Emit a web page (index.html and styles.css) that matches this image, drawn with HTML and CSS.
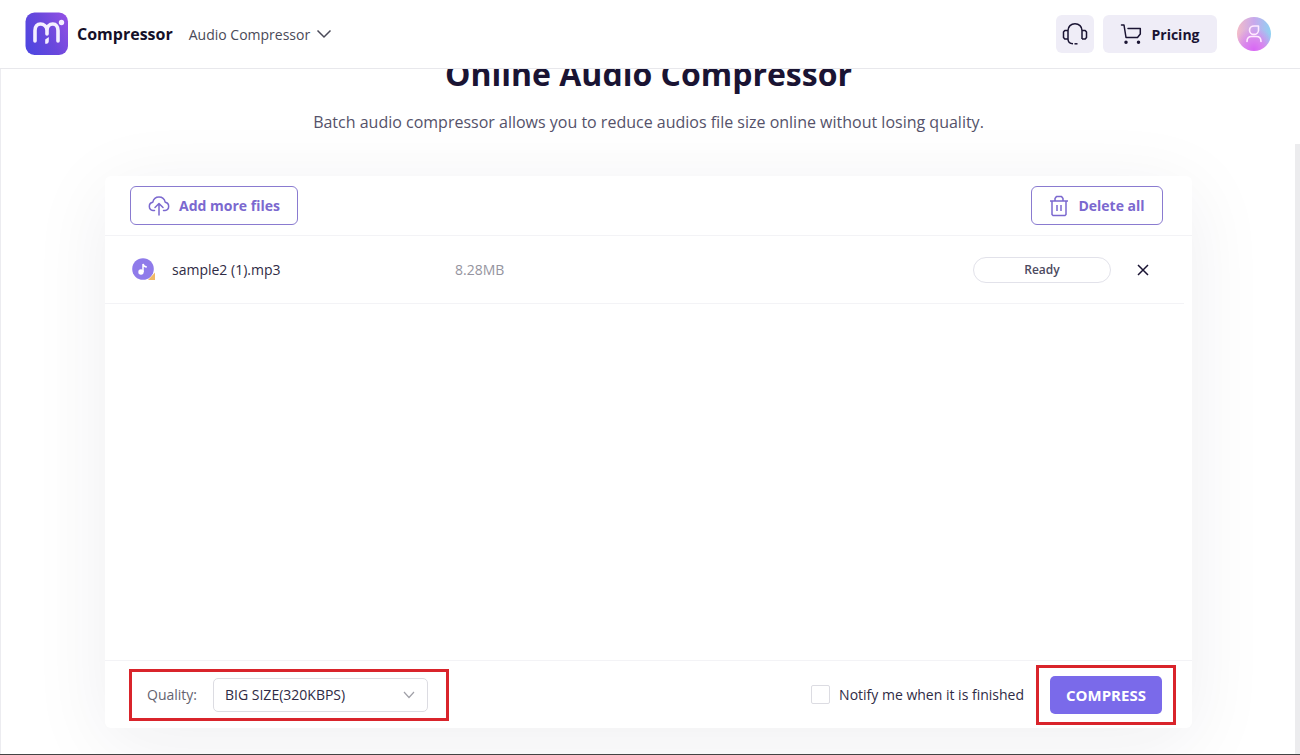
FILE: index.html
```html
<!DOCTYPE html>
<html lang="en">
<head>
  <meta charset="utf-8">
  <title>Online Audio Compressor</title>
  <link rel="stylesheet" href="styles.css">
</head>
<body>
  <header class="header">
    <a class="brand" href="#">
      <svg width="44" height="44" viewBox="0 0 44 44">
        <defs>
          <linearGradient id="logoFill" x1="0" y1="0.7" x2="1" y2="0.2">
            <stop offset="0" stop-color="#5046e0"/>
            <stop offset="0.5" stop-color="#6a48dc"/>
            <stop offset="1" stop-color="#9050e4"/>
          </linearGradient>
        </defs>
        <rect x="0.500" y="0.500" width="42.500" height="42.500" rx="9" fill="url(#logoFill)"/>
        <path d="M10 29V18.500c0-4 2.200-6.500 5.500-6.500s6.500 2.500 6.500 6.500V22M22 18.500c0-4 2.500-6.500 5.800-6.500 3.200 0 5.200 2.500 5.200 6.500V29" fill="none" stroke="#f4efff" stroke-width="3.600" stroke-linecap="round"/>
        <path d="M20.200 27.500l3.600-2.500v4c0 2-1.200 2.800-3.600 2.800z" fill="#f4efff"/>
        <circle cx="36.500" cy="10.500" r="2.700" fill="#f4efff"/>
      </svg>
      <span>Compressor</span>
    </a>
    <button class="menu" type="button">
      Audio Compressor
      <svg width="16" height="10" viewBox="0 0 16 10"><path d="M1.500 1.500L8 8l6.500-6.500" fill="none" stroke="currentColor" stroke-width="1.500"/></svg>
    </button>
    <div class="header-right">
      <button class="soft-btn support" type="button" aria-label="Support">
        <svg width="26" height="26" viewBox="0 0 26 26" fill="none" stroke="currentColor" stroke-width="1.500" stroke-linejoin="round">
          <path d="M6 18V9.500C6 5.500 9 2.800 13 2.800s7 2.700 7 6.700V18M6 18c0 2.600 2 4.600 5 4.800M6 9.500H2.800L1.500 11v5.500L2.800 18H6M20 9.500h3.200l1.300 1.500v5.500L23.200 18H20"/>
          <path d="M12.500 22.800h3"/>
        </svg>
      </button>
      <button class="soft-btn pricing" type="button">
        <svg width="22" height="22" viewBox="0 0 22 22" fill="none" stroke="currentColor" stroke-width="1.500" stroke-linecap="round" stroke-linejoin="round">
          <path d="M1.500 2H4l2 12.500h11.500l2.800-3.500V5.500H8"/>
          <circle cx="6" cy="19.300" r="1" fill="currentColor"/>
          <circle cx="18.500" cy="19.300" r="1" fill="currentColor"/>
        </svg>
        Pricing
      </button>
      <button class="avatar" type="button" aria-label="Account">
        <svg width="20" height="20" viewBox="0 0 20 20" fill="none" stroke="#ffe9ff" stroke-width="1.600" stroke-linecap="round" stroke-linejoin="round">
          <path d="M14.500 2v4.500a4.500 4.200 0 1 1-4.500-4.500zM3 17.500c0-3.500 1.800-5 4.500-5h5c2.700 0 4.500 1.500 4.500 5"/>
        </svg>
      </button>
    </div>
  </header>

  <main class="page">
    <h1>Online Audio Compressor</h1>
    <p class="intro">Batch audio compressor allows you to reduce audios file size online without losing quality.</p>

    <section class="card">
      <div class="toolbar">
        <button class="outline-btn" type="button">
          <svg width="22" height="20" viewBox="0 0 22 20" fill="none" stroke="currentColor" stroke-width="1.500" stroke-linecap="round" stroke-linejoin="round">
            <path d="M6.500 14.500H5A4.200 4.200 0 0 1 4.800 6.200C5.500 3 8 1 11 1s5.500 2 6.200 5.200A4.200 4.200 0 0 1 17 14.500h-1.500M11 19V8M7 11.500L11 7.500l4 4"/>
          </svg>
          Add more files
        </button>
        <button class="outline-btn delete" type="button">
          <svg width="20" height="22" viewBox="0 0 20 22" fill="none" stroke="currentColor" stroke-width="1.500" stroke-linejoin="round">
            <path d="M1 6h18M6 6V3.500L7.500 1.500h5L14 3.500V6M3 6v13.500l1 1h12l1-1V6M8 10v6M12 10v6"/>
          </svg>
          Delete all
        </button>
      </div>

      <div class="files">
        <div class="file">
          <svg class="file-icon" width="24" height="24" viewBox="0 0 24 24">
            <circle cx="11" cy="11" r="10.800" fill="#8f7bea"/>
            <path d="M23 14.500V22H16z" fill="#f0b866"/>
            <circle cx="9" cy="14" r="2.700" fill="#fff"/>
            <path d="M11 14V6c.5 2 1.500 2.800 3.800 3" fill="none" stroke="#fff" stroke-width="1.500"/>
          </svg>
          <span class="file-name">sample2 (1).mp3</span>
          <span class="file-size">8.28MB</span>
          <span class="status">Ready</span>
          <button class="remove" type="button" aria-label="Remove file">
            <svg width="12" height="12" viewBox="0 0 12 12"><path d="M1 1l10 10M11 1L1 11" stroke="currentColor" stroke-width="1.500"/></svg>
          </button>
        </div>
      </div>

      <div class="footer">
        <div class="mark quality">
          <label for="quality">Quality:</label>
          <div class="select-box">
            <select id="quality">
              <option>BIG SIZE(320KBPS)</option>
            </select>
            <svg width="12" height="8" viewBox="0 0 12 8"><path d="M1 1l5 5.500L11 1" fill="none" stroke="#a0a0a8" stroke-width="1.200"/></svg>
          </div>
        </div>
        <div class="notify">
          <input type="checkbox" id="notify">
          <label for="notify">Notify me when it is finished</label>
        </div>
        <div class="mark action">
          <button class="compress" type="button">COMPRESS</button>
        </div>
      </div>
    </section>
    <div class="scrollbar"></div>
  </main>
</body>
</html>
```
FILE: styles.css
```css
* {
  box-sizing: border-box;
}
body {
  margin: 0;
  height: 100vh;
  display: flex;
  flex-direction: column;
  overflow: hidden;
  background: #fff;
  border-bottom: 1px solid #444;
  color: #1a1433;
  font-family: "Open Sans", "Noto Sans", sans-serif;
  font-size: 14px;
}
button, select {
  font: inherit;
  color: inherit;
  background: none;
  border: none;
  padding: 0;
  cursor: pointer;
}
svg {
  display: block;
  flex: none;
}

/* header */
.header {
  flex: none;
  display: flex;
  align-items: center;
  height: 69px;
  padding: 0 29px 0 25px;
  border-bottom: 1px solid #e8e8ec;
}
.brand {
  display: flex;
  align-items: center;
  gap: 8px;
  color: #151028;
  font-size: 16px;
  font-weight: 700;
  text-decoration: none;
}
.menu {
  display: flex;
  align-items: center;
  gap: 6px;
  margin-left: 16px;
  color: #4a4a58;
}
.header-right {
  display: flex;
  align-items: center;
  margin-left: auto;
}
.soft-btn {
  display: flex;
  align-items: center;
  justify-content: center;
  height: 38px;
  border-radius: 6px;
  background: #efedf7;
}
.support {
  width: 38px;
  margin-right: 9px;
}
.pricing {
  width: 114px;
  gap: 9px;
  margin-right: 20px;
  font-weight: 700;
}
.avatar {
  display: flex;
  align-items: center;
  justify-content: center;
  width: 34px;
  height: 34px;
  border-radius: 50%;
  background: radial-gradient(circle at 50% 95%, #d967f5 0, #d984ee 25%, transparent 60%),
    linear-gradient(90deg, #f3bcc8, #c8a8ec 50%, #8fd2f2);
}

/* page */
.page {
  position: relative;
  flex: 1;
  min-height: 0;
  display: flex;
  flex-direction: column;
  overflow: hidden;
  padding: 0 108px 26px 104px;
  border-left: 1px solid #ececf0;
}
h1 {
  margin: -18px 0 0;
  font-size: 32px;
  line-height: 46px;
  text-align: center;
}
.intro {
  margin: 13px 0 41px;
  color: #55526a;
  font-size: 16px;
  line-height: 25px;
  text-align: center;
}
.scrollbar {
  position: absolute;
  top: 75px;
  right: 0;
  bottom: 0;
  width: 5px;
  background: #ececee;
}

/* file card */
.card {
  flex: 1;
  display: flex;
  flex-direction: column;
  border-radius: 6px;
  background: #fff;
  box-shadow: 0 15px 80px rgba(30, 25, 60, 0.07);
}
.toolbar {
  display: flex;
  align-items: center;
  justify-content: space-between;
  height: 60px;
  padding: 0 29px 0 25px;
  border-bottom: 1px solid #f3f3f6;
}
.outline-btn {
  display: flex;
  align-items: center;
  justify-content: center;
  gap: 9px;
  width: 168px;
  height: 39px;
  border: 1px solid #8a7bd0;
  border-radius: 6px;
  color: #7b68cf;
  font-weight: 700;
}
.delete {
  width: 132px;
}
.files {
  flex: 1;
}
.file {
  display: flex;
  align-items: center;
  height: 68px;
  margin-right: 8px;
  padding: 0 35px 0 27px;
  border-bottom: 1px solid #f3f3f6;
}
.file-name {
  width: 283px;
  margin-left: 16px;
  color: #2f2b45;
}
.file-size {
  color: #9594a0;
}
.status {
  width: 138px;
  margin-left: auto;
  border: 1px solid #e2e2ea;
  border-radius: 13px;
  color: #4c4a60;
  font-size: 12px;
  font-weight: 600;
  line-height: 24px;
  text-align: center;
}
.remove {
  margin-left: 26px;
}

/* settings and action */
.footer {
  display: flex;
  align-items: center;
  height: 68px;
  padding: 0 16px 0 24px;
  border-top: 1px solid #f3f3f6;
}
.mark {
  display: flex;
  align-items: center;
  border: 3px solid #d9242b;
}
.quality {
  width: 320px;
  height: 52px;
  gap: 16px;
  padding-left: 15px;
  color: #65636f;
}
.select-box {
  position: relative;
  width: 215px;
}
.select-box select {
  width: 100%;
  height: 34px;
  padding: 0 11px;
  border: 1px solid #dcdce2;
  border-radius: 5px;
  color: #2f2b45;
  appearance: none;
}
.select-box svg {
  position: absolute;
  top: 13px;
  right: 13px;
  pointer-events: none;
}
.notify {
  display: flex;
  align-items: center;
  gap: 9px;
  margin: 0 12px 0 auto;
  color: #2f2b45;
}
.notify input {
  width: 19px;
  height: 19px;
  margin: 0;
  border: 1px solid #dcdce2;
  border-radius: 2px;
  appearance: none;
}
.action {
  justify-content: center;
  width: 140px;
  height: 60px;
}
.compress {
  width: 112px;
  height: 38px;
  border-radius: 5px;
  background: #7a6aea;
  color: #fff;
  font-size: 15px;
  font-weight: 700;
}
```
